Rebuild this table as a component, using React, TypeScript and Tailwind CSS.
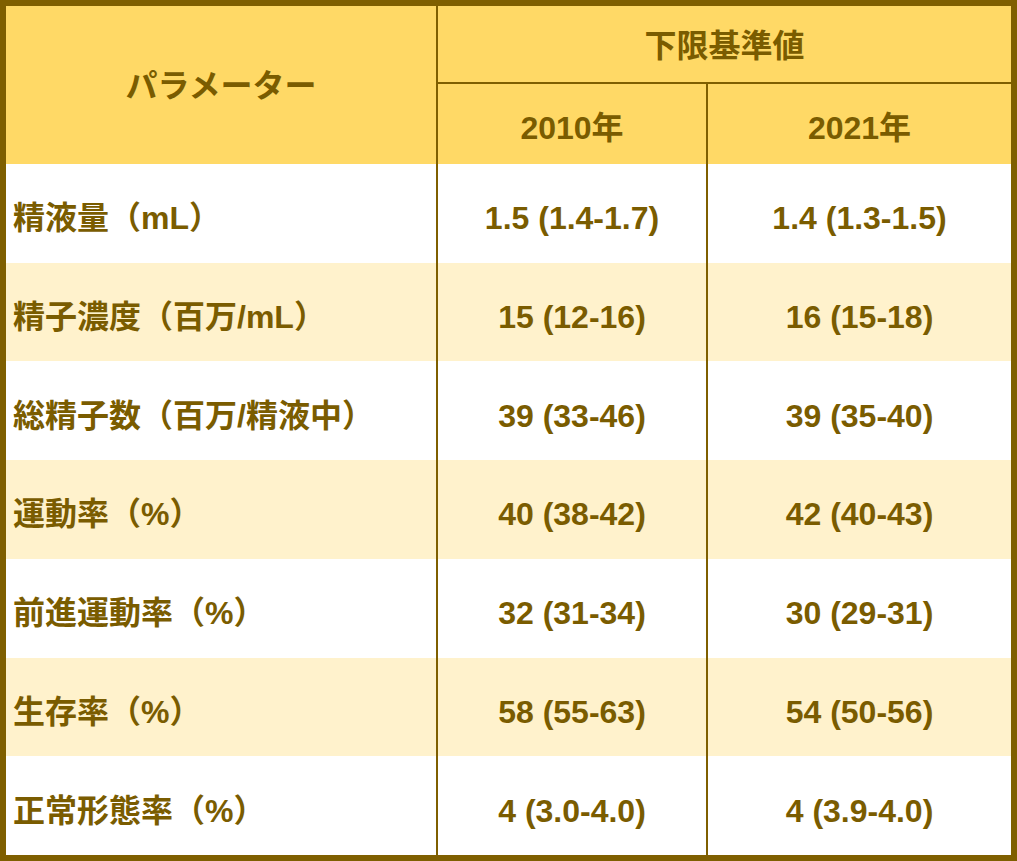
const rows: [string, string, string][] = [
  ['精液量（mL）', '1.5 (1.4-1.7)', '1.4 (1.3-1.5)'],
  ['精子濃度（百万/mL）', '15 (12-16)', '16 (15-18)'],
  ['総精子数（百万/精液中）', '39 (33-46)', '39 (35-40)'],
  ['運動率（%）', '40 (38-42)', '42 (40-43)'],
  ['前進運動率（%）', '32 (31-34)', '30 (29-31)'],
  ['生存率（%）', '58 (55-63)', '54 (50-56)'],
  ['正常形態率（%）', '4 (3.0-4.0)', '4 (3.9-4.0)'],
];

export default function App() {
  return (
    <div
      className="box-border flex h-[861px] w-[1017px] flex-col border-[6px] border-[#7f5f00] bg-white text-[32px] font-bold leading-none text-[#7a5c00]"
      style={{ fontFamily: '"Liberation Sans", "Noto Sans CJK JP", sans-serif' }}
    >
      <div className="grid h-[158px] shrink-0 grid-cols-[430px_270px_305px] grid-rows-[78px_80px] bg-[#ffd966]">
        <div className="row-span-2 flex items-center justify-center pt-[2px]">パラメーター</div>
        <div className="col-span-2 flex items-center justify-center border-b-2 border-l-2 border-[#7f5f00] pt-[4px]">
          下限基準値
        </div>
        <div className="flex items-center justify-center border-l-2 border-[#7f5f00] pt-[8px]">2010年</div>
        <div className="flex items-center justify-center border-l-2 border-[#7f5f00] pt-[8px]">2021年</div>
      </div>
      <div className="grid flex-1 grid-cols-[430px_270px_305px] grid-rows-7">
        {rows.map(([label, a, b], i) => (
          <div key={label} className="contents">
            <div className={`flex items-center pl-[7px] pt-[10px] ${i % 2 ? 'bg-[#fff2cc]' : 'bg-white'}`}>{label}</div>
            <div className={`flex items-center justify-center border-l-2 border-[#7f5f00] pt-[10px] ${i % 2 ? 'bg-[#fff2cc]' : 'bg-white'}`}>{a}</div>
            <div className={`flex items-center justify-center border-l-2 border-[#7f5f00] pt-[10px] ${i % 2 ? 'bg-[#fff2cc]' : 'bg-white'}`}>{b}</div>
          </div>
        ))}
      </div>
    </div>
  );
}
